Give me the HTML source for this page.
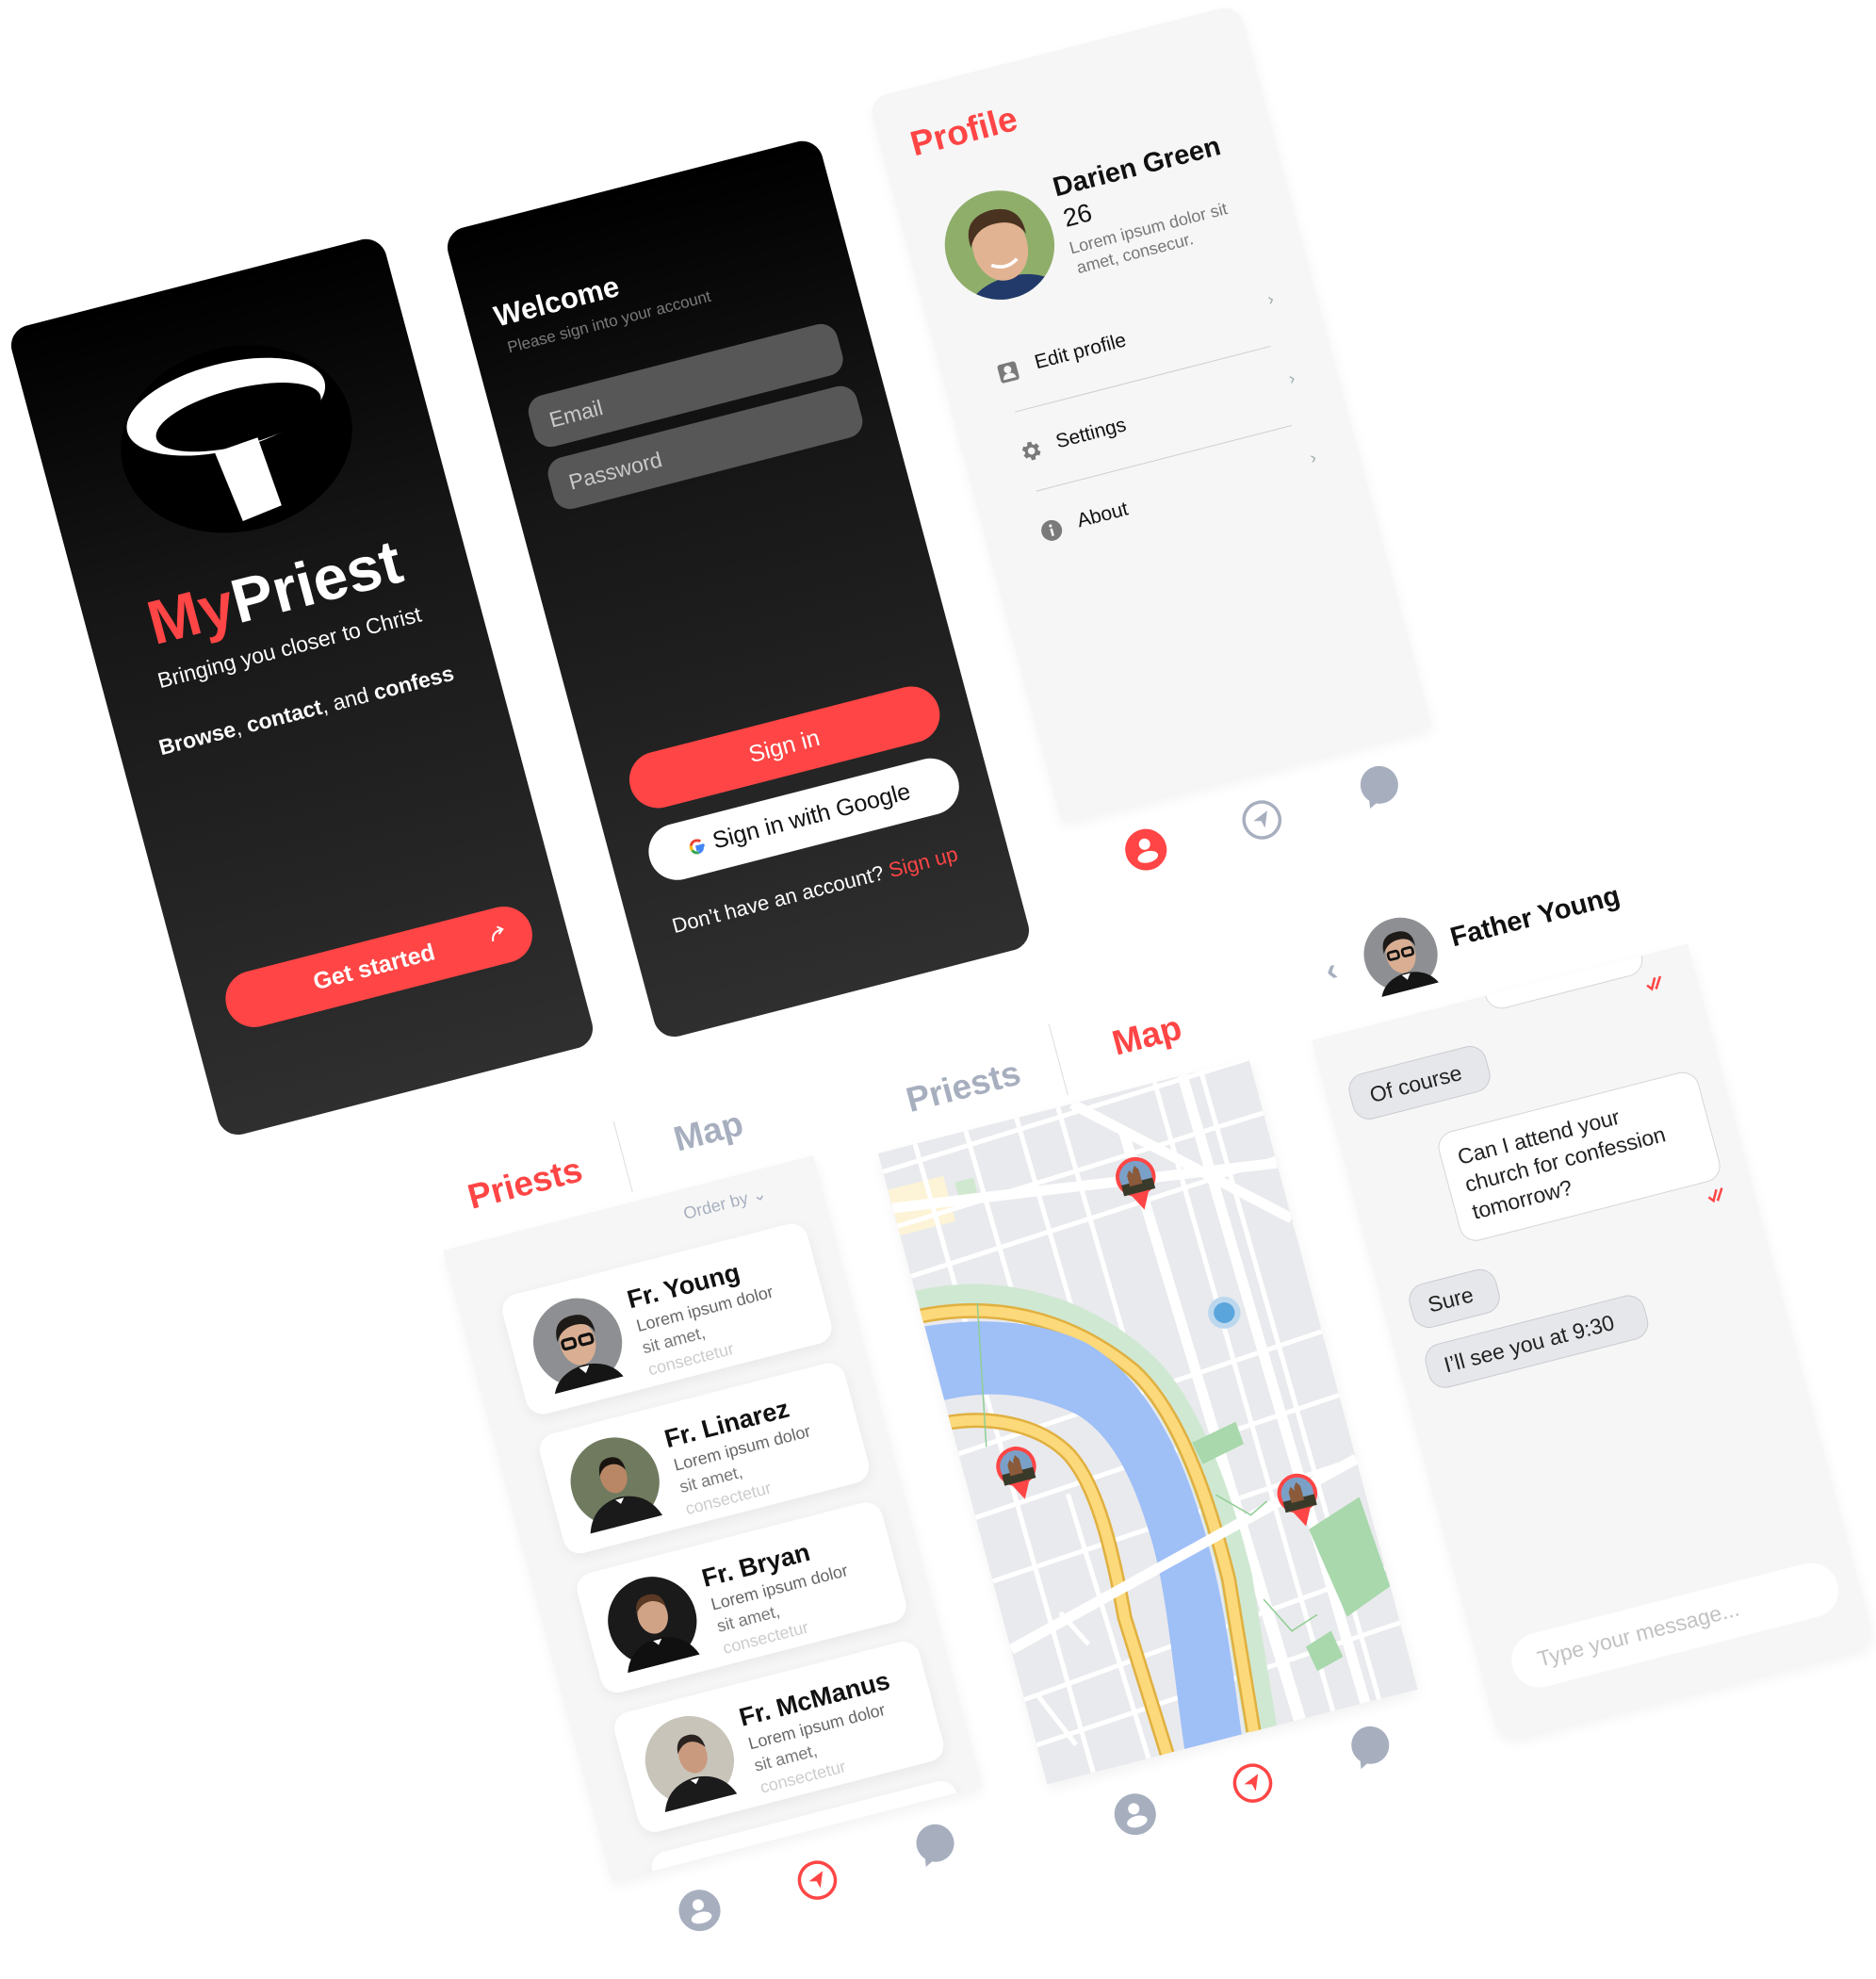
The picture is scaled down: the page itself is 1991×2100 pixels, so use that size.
<!DOCTYPE html>
<html><head><meta charset="utf-8">
<style>
*{margin:0;padding:0;box-sizing:border-box}
html,body{width:1991px;height:2097px;background:#fff;overflow:hidden;font-family:"Liberation Sans",Arial,sans-serif}
.scr{position:absolute;transform-origin:0 0;transform:rotate(-14.4deg) skewX(0.6deg)}
.a{position:absolute;white-space:nowrap;line-height:1}
.dark{width:410px;height:888px;border-radius:22px;background:linear-gradient(180deg,#000 0%,#161616 35%,#2f2f2f 100%);overflow:hidden}
.panel{position:absolute;left:0;top:0;background:#f6f6f6;box-shadow:0 6px 14px rgba(0,0,0,.05)}
.card{position:absolute;left:44px;width:334px;height:131px;background:#fff;border-radius:18px;box-shadow:0 4px 14px rgba(0,0,0,.06)}
.bub{position:absolute;border-radius:18px;font-size:23px;color:#222;line-height:1}
.g{background:#e6e7ea;border:1px solid #c9cbd0}
.w{background:#fff;border:1px solid #d6d6d6}
</style></head><body>

<svg width="0" height="0" style="position:absolute">
<defs>
<symbol id="priest" viewBox="0 0 100 100">
<circle cx="50" cy="50" r="50" fill="#8d8f92"/>
<path d="M10 100 Q20 78 50 76 Q80 78 90 100Z" fill="#151515"/>
<path d="M44 78 L50 86 L56 78Z" fill="#fff"/>
<ellipse cx="50" cy="50" rx="20" ry="26" fill="#d9ae92"/>
<path d="M28 44 Q28 18 52 19 Q74 20 72 44 Q68 30 52 30 Q36 30 28 44Z" fill="#1e1a18"/>
<rect x="33" y="44" width="14" height="10" rx="3" fill="none" stroke="#111" stroke-width="3.5"/>
<rect x="53" y="44" width="14" height="10" rx="3" fill="none" stroke="#111" stroke-width="3.5"/>
</symbol>
<symbol id="priest2" viewBox="0 0 100 100">
<circle cx="50" cy="50" r="50" fill="#6f7a5f"/>
<path d="M8 100 Q18 70 50 68 Q82 70 92 100Z" fill="#1a1a1a"/>
<path d="M45 70 L50 76 L55 70Z" fill="#fff"/>
<ellipse cx="50" cy="44" rx="15" ry="19" fill="#b98766"/>
<path d="M35 40 Q36 22 50 22 Q65 22 65 40 Q60 30 50 30 Q40 30 35 40Z" fill="#1a1410"/>
</symbol>
<symbol id="priest3" viewBox="0 0 100 100">
<circle cx="50" cy="50" r="50" fill="#1a1a1a"/>
<path d="M8 100 Q18 72 50 70 Q82 72 92 100Z" fill="#101010"/>
<path d="M45 72 L50 78 L55 72Z" fill="#fff"/>
<ellipse cx="52" cy="44" rx="17" ry="21" fill="#d0a387"/>
<path d="M35 38 Q36 20 52 20 Q68 20 69 38 Q62 28 52 28 Q42 28 35 38Z" fill="#5a3a24"/>
</symbol>
<symbol id="priest4" viewBox="0 0 100 100">
<circle cx="50" cy="50" r="50" fill="#c8c4ba"/>
<path d="M8 100 Q18 72 50 70 Q82 72 92 100Z" fill="#1b1b1b"/>
<path d="M45 72 L50 78 L55 72Z" fill="#fff"/>
<ellipse cx="55" cy="46" rx="16" ry="20" fill="#c99a7e"/>
<path d="M39 40 Q40 22 55 22 Q70 22 71 40 Q64 30 55 30 Q46 30 39 40Z" fill="#2a2320"/>
</symbol>
<symbol id="church" viewBox="0 0 40 40">
<circle cx="20" cy="20" r="20" fill="#7aa0c8"/>
<rect x="0" y="26" width="40" height="14" fill="#3a3a2a"/>
<path d="M10 30 L10 16 L14 10 L18 16 L18 12 L22 6 L26 12 L26 30Z" fill="#8a5a3a"/>
</symbol>
</defs>
</svg>

<!-- SCREEN 1 -->
<div class="scr dark" style="left:7px;top:351px;">
  <svg class="a" style="left:0;top:0" width="410" height="300" viewBox="0 0 402 300">
    <ellipse cx="202" cy="172" rx="124" ry="98" fill="#000"/>
    <ellipse cx="200" cy="136" rx="108" ry="46" fill="#fff"/>
    <ellipse cx="210" cy="150" rx="90" ry="30" fill="#000"/>
    <path d="M176 180 L224 176 L230 252 L186 258Z" fill="#fff"/>
  </svg>
  <div class="a" style="left:0;width:406px;text-align:center;top:306px;font-size:66px;font-weight:bold;color:#fff"><span style="color:#ff4545">My</span>Priest</div>
  <div class="a" style="left:0;width:406px;text-align:center;top:389px;font-size:23px;color:#fff">Bringing you closer to Christ</div>
  <div class="a" style="left:0;width:406px;text-align:center;top:458px;font-size:23px;color:#fff"><b>Browse</b>, <b>contact</b>, and <b>confess</b></div>
  <div class="a" style="left:40px;top:722px;width:334px;height:60px;border-radius:30px;background:#ff4545"></div>
  <div class="a" style="left:40px;top:739px;width:334px;text-align:center;font-size:25px;font-weight:bold;color:#fff;padding-right:10px">Get started</div>
  <svg class="a" style="left:326px;top:738px" width="24" height="24" viewBox="0 0 24 24"><path d="M5 18 Q6 8 17 8" fill="none" stroke="#fff" stroke-width="2"/><path d="M13 4 L18 8 L13 12" fill="none" stroke="#fff" stroke-width="2"/></svg>
</div>

<!-- SCREEN 2 -->
<div class="scr dark" style="left:470px;top:247px;">
  <div class="a" style="left:30px;top:85px;font-size:31px;font-weight:bold;color:#fff">Welcome</div>
  <div class="a" style="left:35px;top:127px;font-size:17px;color:#7a7a7a">Please sign into your account</div>
  <div class="a" style="left:38px;top:193px;width:338px;height:56px;border-radius:18px;background:#575757"></div>
  <div class="a" style="left:58px;top:210px;font-size:23px;color:#c9c9c9">Email</div>
  <div class="a" style="left:41px;top:262px;width:338px;height:56px;border-radius:18px;background:#575757"></div>
  <div class="a" style="left:61px;top:279px;font-size:23px;color:#c9c9c9">Password</div>
  <div class="a" style="left:40px;top:589px;width:338px;height:60px;border-radius:30px;background:#ff4545"></div>
  <div class="a" style="left:40px;top:606px;width:338px;text-align:center;font-size:25px;color:#fff">Sign in</div>
  <div class="a" style="left:40px;top:668px;width:338px;height:60px;border-radius:30px;background:#fff"></div>
  <svg class="a" style="left:82px;top:688px" width="20" height="20" viewBox="0 0 20 20">
    <path d="M18 10.2 H10 V13 H15 Q14 16 10 16.5" fill="none" stroke="#4285f4" stroke-width="3"/>
    <path d="M10 16.5 Q5.5 16.5 4 12.5" fill="none" stroke="#34a853" stroke-width="3"/>
    <path d="M4 12.5 Q3 10 4 7.5" fill="none" stroke="#fbbc05" stroke-width="3"/>
    <path d="M4 7.5 Q6 3.5 10 3.5 Q13 3.5 15 5.3" fill="none" stroke="#ea4335" stroke-width="3"/>
  </svg>
  <div class="a" style="left:110px;top:685px;font-size:25px;color:#111">Sign in with Google</div>
  <div class="a" style="left:45px;top:763px;font-size:22px;color:#fff">Don’t have an account? <span style="color:#ff4545">Sign up</span></div>
</div>

<!-- SCREEN 3 PROFILE -->
<div class="scr" style="left:921px;top:105px;width:402px;height:890px;">
  <div class="panel" style="width:406px;height:794px;border-radius:20px 20px 0 0;"></div>
  <div class="a" style="left:32px;top:40px;font-size:37px;font-weight:bold;color:#ff4545">Profile</div>
  <svg class="a" style="left:37px;top:127px" width="116" height="116" viewBox="0 0 100 100">
    <defs><clipPath id="pc"><circle cx="50" cy="50" r="50"/></clipPath></defs>
    <g clip-path="url(#pc)">
    <rect width="100" height="100" fill="#8fae6a"/>
    <path d="M5 100 Q20 80 50 80 Q80 80 95 100Z" fill="#223a6a"/>
    <ellipse cx="50" cy="52" rx="25" ry="31" fill="#e2b393"/>
    <path d="M24 46 Q22 18 50 17 Q78 18 76 46 Q70 30 50 30 Q32 30 24 46Z" fill="#4a3220"/>
    <path d="M38 66 Q50 74 62 66" fill="none" stroke="#fff" stroke-width="3"/>
    </g>
  </svg>
  <div class="a" style="left:166px;top:127px;font-size:29px;font-weight:bold;color:#111">Darien Green</div>
  <div class="a" style="left:168px;top:162px;font-size:27px;color:#111">26</div>
  <div class="a" style="left:166px;top:198px;font-size:18px;color:#777">Lorem ipsum dolor sit</div>
  <div class="a" style="left:168px;top:220px;font-size:18px;color:#777">amet, consecur.</div>
  <svg class="a" style="left:57px;top:306px" width="24" height="24" viewBox="0 0 24 24"><rect x="2" y="2" width="20" height="20" rx="3" fill="#7a7a7a"/><circle cx="12" cy="9" r="4" fill="#f6f6f6"/><path d="M5 19 Q6 13 12 13 Q18 13 19 19Z" fill="#f6f6f6"/></svg>
  <div class="a" style="left:99px;top:305px;font-size:21px;color:#111">Edit profile</div>
  <div class="a" style="left:355px;top:303px;font-size:18px;color:#9aa">›</div>
  <div class="a" style="left:65px;top:360px;width:280px;height:1px;background:#cfcfcf"></div>
  <svg class="a" style="left:57px;top:392px" width="26" height="26" viewBox="0 0 24 24"><path fill="#7a7a7a" d="M19.4 13a7.5 7.5 0 000-2l2.1-1.6-2-3.5-2.5 1a7.7 7.7 0 00-1.7-1L15 3h-4l-.4 2.8a7.7 7.7 0 00-1.7 1l-2.5-1-2 3.5L6.6 11a7.5 7.5 0 000 2l-2.1 1.6 2 3.5 2.5-1a7.7 7.7 0 001.7 1L11 21h4l.4-2.8a7.7 7.7 0 001.7-1l2.5 1 2-3.5zM13 15.5a3.5 3.5 0 110-7 3.5 3.5 0 010 7z"/></svg>
  <div class="a" style="left:99px;top:392px;font-size:21px;color:#111">Settings</div>
  <div class="a" style="left:355px;top:390px;font-size:18px;color:#9aa">›</div>
  <div class="a" style="left:65px;top:447px;width:280px;height:1px;background:#cfcfcf"></div>
  <svg class="a" style="left:58px;top:480px" width="24" height="24" viewBox="0 0 24 24"><circle cx="12" cy="12" r="11" fill="#7a7a7a"/><rect x="10.7" y="10" width="2.6" height="8" fill="#f6f6f6"/><circle cx="12" cy="7" r="1.6" fill="#f6f6f6"/></svg>
  <div class="a" style="left:99px;top:479px;font-size:21px;color:#111">About</div>
  <div class="a" style="left:355px;top:477px;font-size:18px;color:#9aa">›</div>
  <svg class="a" style="left:57px;top:823px" width="44" height="44" viewBox="0 0 44 44"><circle cx="22" cy="22" r="22" fill="#ff4545"/><circle cx="22" cy="16" r="6" fill="#fff"/><ellipse cx="22" cy="30" rx="11" ry="6" fill="#fff"/></svg>
  <svg class="a" style="left:184px;top:823px" width="44" height="44" viewBox="0 0 44 44"><circle cx="22" cy="22" r="19" fill="none" stroke="#a7afbf" stroke-width="3.5"/><path d="M30 14 L13 21 L21 23 L23 31Z" fill="#a7afbf"/></svg>
  <svg class="a" style="left:312px;top:818px" width="48" height="48" viewBox="0 0 48 48"><circle cx="24" cy="22" r="20" fill="#a7afbf"/><path d="M10 32 L8 44 L20 38Z" fill="#a7afbf"/></svg>
</div>

<!-- SCREEN 4 PRIESTS LIST -->
<div class="scr" style="left:470px;top:1327px;width:402px;height:800px;">
  <div class="a" style="left:41px;top:-66px;font-size:37px;font-weight:bold;color:#ff4545">Priests</div>
  <div class="a" style="left:210px;top:-88px;width:1px;height:78px;background:#ddd"></div>
  <div class="a" style="left:268px;top:-71px;font-size:37px;font-weight:bold;color:#a7afbf">Map</div>
  <div class="panel" style="width:406px;height:693px;background:#f6f6f6;overflow:hidden">
    <div class="a" style="left:257px;top:17px;font-size:18px;color:#a7afbf">Order by ⌄</div>
    <div class="card" style="top:64px"></div>
    <div class="card" style="top:217px"></div>
    <div class="card" style="top:370px"></div>
    <div class="card" style="top:523px"></div>
    <div class="card" style="top:676px"></div>
  </div>
  <svg class="a" style="left:66px;top:83px" width="94" height="94"><use href="#priest"/></svg>
  <div class="a" style="left:176px;top:87px;font-size:27px;font-weight:bold;color:#111">Fr. Young</div>
  <div class="a" style="left:178px;top:120px;font-size:18px;color:#666">Lorem ipsum dolor</div>
  <div class="a" style="left:178px;top:144px;font-size:18px;color:#777">sit amet,</div>
  <div class="a" style="left:178px;top:168px;font-size:18px;color:#ccc">consectetur</div>

  <svg class="a" style="left:66px;top:236px" width="94" height="94"><use href="#priest2"/></svg>
  <div class="a" style="left:176px;top:240px;font-size:27px;font-weight:bold;color:#111">Fr. Linarez</div>
  <div class="a" style="left:178px;top:273px;font-size:18px;color:#666">Lorem ipsum dolor</div>
  <div class="a" style="left:178px;top:297px;font-size:18px;color:#777">sit amet,</div>
  <div class="a" style="left:178px;top:321px;font-size:18px;color:#ccc">consectetur</div>

  <svg class="a" style="left:66px;top:389px" width="94" height="94"><use href="#priest3"/></svg>
  <div class="a" style="left:176px;top:393px;font-size:27px;font-weight:bold;color:#111">Fr. Bryan</div>
  <div class="a" style="left:178px;top:426px;font-size:18px;color:#666">Lorem ipsum dolor</div>
  <div class="a" style="left:178px;top:450px;font-size:18px;color:#777">sit amet,</div>
  <div class="a" style="left:178px;top:474px;font-size:18px;color:#ccc">consectetur</div>

  <svg class="a" style="left:66px;top:542px" width="94" height="94"><use href="#priest4"/></svg>
  <div class="a" style="left:176px;top:546px;font-size:27px;font-weight:bold;color:#111">Fr. McManus</div>
  <div class="a" style="left:178px;top:579px;font-size:18px;color:#666">Lorem ipsum dolor</div>
  <div class="a" style="left:178px;top:603px;font-size:18px;color:#777">sit amet,</div>
  <div class="a" style="left:178px;top:627px;font-size:18px;color:#ccc">consectetur</div>
  <svg class="a" style="left:60px;top:724px" width="44" height="44" viewBox="0 0 44 44"><circle cx="22" cy="22" r="22" fill="#a7afbf"/><circle cx="22" cy="16" r="6" fill="#fff"/><ellipse cx="22" cy="30" rx="11" ry="6" fill="#fff"/></svg>
  <svg class="a" style="left:189px;top:724px" width="44" height="44" viewBox="0 0 44 44"><circle cx="22" cy="22" r="19" fill="none" stroke="#ff4545" stroke-width="3.5"/><path d="M30 14 L13 21 L21 23 L23 31Z" fill="#ff4545"/></svg>
  <svg class="a" style="left:318px;top:717px" width="48" height="48" viewBox="0 0 48 48"><circle cx="24" cy="22" r="20" fill="#a7afbf"/><path d="M10 32 L8 44 L20 38Z" fill="#a7afbf"/></svg>
</div>

<!-- SCREEN 5 MAP -->
<div class="scr" style="left:932px;top:1224px;width:402px;height:800px;">
  <div class="a" style="left:44px;top:-65px;font-size:37px;font-weight:bold;color:#a7afbf">Priests</div>
  <div class="a" style="left:210px;top:-88px;width:1px;height:78px;background:#ddd"></div>
  <div class="a" style="left:271px;top:-69px;font-size:37px;font-weight:bold;color:#ff4545">Map</div>
  <div class="panel" style="width:406px;height:693px;overflow:hidden;background:#e9eaed">
  <svg width="406" height="693" viewBox="0 0 402 693" preserveAspectRatio="none">
    <rect width="402" height="693" fill="#e9eaed"/>
    <rect x="0" y="40" width="60" height="50" fill="#fdf3d6"/>
    <rect x="70" y="50" width="20" height="25" fill="#cfe8cf"/>
    <g stroke="#fff" stroke-width="5" fill="none">
      <path d="M0 20 L402 0"/><path d="M0 80 L402 60"/><path d="M0 135 L402 110"/><path d="M0 330 L402 300"/>
      <path d="M0 400 L402 370"/><path d="M0 470 L402 440"/><path d="M0 600 L402 560"/><path d="M0 650 L402 620"/>
      <path d="M40 0 L50 693"/><path d="M95 0 L100 250"/><path d="M150 0 L155 230"/><path d="M195 0 L200 260"/>
      <path d="M300 0 L310 693"/><path d="M350 0 L360 693"/><path d="M100 400 L110 693"/><path d="M260 380 L270 693"/>
      <path d="M15 600 L40 660"/><path d="M60 520 L80 560"/>
    </g>
    <g stroke="#fff" stroke-width="11" fill="none">
      <path d="M0 60 L402 115"/><path d="M210 0 L402 176"/><path d="M255 40 L275 693"/><path d="M0 545 L402 440"/><path d="M330 0 L345 693"/>
    </g>
    <path d="M0 168 C80 170 160 210 210 290 C240 340 250 430 248 530 L232 693" fill="none" stroke="#cfe8d2" stroke-width="34"/>
    <path d="M-5 178 C80 182 150 220 200 290 C232 340 242 430 240 530 L224 693" fill="none" stroke="#e0b040" stroke-width="16"/>
    <path d="M-5 178 C80 182 150 220 200 290 C232 340 242 430 240 530 L224 693" fill="none" stroke="#fcd97a" stroke-width="11"/>
    <path d="M0 190 C60 195 120 215 160 250 C200 290 225 360 228 455 C232 540 220 620 211 693 L149 693 C160 600 175 520 172 460 C170 400 160 350 130 320 C100 295 60 272 0 271 Z" fill="#9fbff7"/>
    <path d="M-5 295 C40 298 90 320 112 360 C132 400 130 470 124 542 L130 693" fill="none" stroke="#e0b040" stroke-width="16"/>
    <path d="M-5 295 C40 298 90 320 112 360 C132 400 130 470 124 542 L130 693" fill="none" stroke="#fcd97a" stroke-width="11"/>
    <path d="M0 545 L402 440" stroke="#fff" stroke-width="11"/>
    <g fill="#a8d8ac"><path d="M335 500 L395 480 L402 580 L350 600Z"/><path d="M240 380 L290 370 L292 395 L245 405Z"/><path d="M300 620 L330 610 L335 640 L305 648Z"/></g>
    <g stroke="#8fce93" stroke-width="1.5" fill="none"><path d="M60 180 L30 330"/><path d="M250 440 L280 470 L300 460"/><path d="M270 560 L290 600 L320 590"/></g>
    <circle cx="308" cy="255" r="17" fill="#bcd8ef"/><circle cx="308" cy="255" r="11" fill="#5aa6dc"/>
    <g>
      <path d="M243 105 L255 128 L267 105Z" fill="#ff4545"/><circle cx="255" cy="92" r="21" fill="#ff4545"/>
      <svg x="238" y="75" width="34" height="34" viewBox="0 0 40 40"><use href="#church"/></svg>
    </g>
    <g>
      <path d="M43 371 L55 394 L67 371Z" fill="#ff4545"/><circle cx="55" cy="358" r="21" fill="#ff4545"/>
      <svg x="38" y="341" width="34" height="34" viewBox="0 0 40 40"><use href="#church"/></svg>
    </g>
    <g>
      <path d="M321 473 L333 496 L345 473Z" fill="#ff4545"/><circle cx="333" cy="460" r="21" fill="#ff4545"/>
      <svg x="316" y="443" width="34" height="34" viewBox="0 0 40 40"><use href="#church"/></svg>
    </g>
  </svg>
  </div>
  <svg class="a" style="left:60px;top:725px" width="44" height="44" viewBox="0 0 44 44"><circle cx="22" cy="22" r="22" fill="#a7afbf"/><circle cx="22" cy="16" r="6" fill="#fff"/><ellipse cx="22" cy="30" rx="11" ry="6" fill="#fff"/></svg>
  <svg class="a" style="left:189px;top:724px" width="44" height="44" viewBox="0 0 44 44"><circle cx="22" cy="22" r="19" fill="none" stroke="#ff4545" stroke-width="3.5"/><path d="M30 14 L13 21 L21 23 L23 31Z" fill="#ff4545"/></svg>
  <svg class="a" style="left:318px;top:716px" width="48" height="48" viewBox="0 0 48 48"><circle cx="24" cy="22" r="20" fill="#a7afbf"/><path d="M10 32 L8 44 L20 38Z" fill="#a7afbf"/></svg>
</div>

<!-- SCREEN 6 CHAT -->
<div class="scr" style="left:1392px;top:1104px;width:412px;height:780px;">
  <div class="a" style="left:34px;top:-84px;font-size:34px;color:#a7afbf;font-weight:bold">‹</div>
  <svg class="a" style="left:76px;top:-104px" width="78" height="78"><use href="#priest"/></svg>
  <div class="a" style="left:171px;top:-82px;font-size:29px;font-weight:bold;color:#111">Father Young</div>
  <div class="panel" style="width:412px;height:770px;border-radius:0 0 20px 20px;overflow:hidden">
    <div class="bub w" style="left:190px;top:-40px;width:172px;height:58px"></div>
    <div class="bub g" style="left:24px;top:47px;width:150px;height:50px;padding:13px 0 0 20px">Of course</div>
    <div class="bub w" style="left:100px;top:130px;width:285px;height:120px;padding:13px 0 0 17px;line-height:30px">Can I attend your<br>church for confession<br>tomorrow?</div>
    <div class="bub g" style="left:28px;top:279px;width:95px;height:48px;padding:12px 0 0 18px">Sure</div>
    <div class="bub g" style="left:28px;top:345px;width:240px;height:48px;padding:12px 0 0 18px">I’ll see you at 9:30</div>
    <div class="a" style="left:34px;top:668px;width:356px;height:58px;border-radius:29px;background:#fff"></div>
    <div class="a" style="left:62px;top:685px;font-size:23px;color:#c2c2c2">Type your message...</div>
  </div>
  <svg class="a" style="left:357px;top:24px" width="24" height="16" viewBox="0 0 24 16"><path d="M2 8 L6 13 L12 2 M10 12 L11 13 L18 2" fill="none" stroke="#ff4545" stroke-width="2.5"/></svg>
  <svg class="a" style="left:362px;top:258px" width="24" height="16" viewBox="0 0 24 16"><path d="M2 8 L6 13 L12 2 M10 12 L11 13 L18 2" fill="none" stroke="#ff4545" stroke-width="2.5"/></svg>
</div>

</body></html>
